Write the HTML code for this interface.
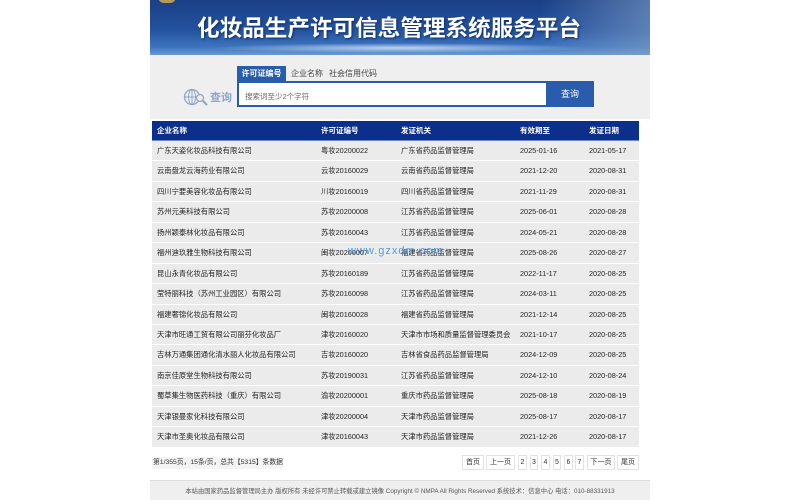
<!DOCTYPE html>
<html><head><meta charset="utf-8"><style>
*{margin:0;padding:0;box-sizing:border-box}
body{width:800px;height:500px;background:#fff;font-family:"Liberation Sans","Noto Sans CJK SC",sans-serif;position:relative;overflow:hidden}
.ban{position:absolute;left:150px;top:0;width:500px;height:55px;background:linear-gradient(180deg,#1a3f86 0%,#24539f 55%,#3d73bd 85%,#6a9ad3 100%);overflow:hidden}
.ban .glow{position:absolute;left:60px;right:60px;bottom:2px;height:10px;background:radial-gradient(ellipse at center,rgba(220,235,255,.8),rgba(120,170,230,0) 70%)}
.ban .city{position:absolute;right:0;top:0;width:110px;height:55px;background:linear-gradient(90deg,rgba(60,100,160,0),rgba(130,160,200,.6))}
.ban .t{position:absolute;left:47px;top:11px;color:#fff;font-size:22.6px;font-weight:bold;font-family:"Noto Sans CJK SC",sans-serif;line-height:32px;text-shadow:1px 1px 2px #0b2a60;white-space:nowrap}
.ban .em{position:absolute;left:8px;top:-3px;width:18px;height:6px;border-radius:0 0 9px 9px;background:#b69a5a}
.sb{position:absolute;left:150px;top:55px;width:500px;height:64px;background:#efefef}
.tab{position:absolute;top:66px;height:15px;font-size:8px;line-height:15px;color:#444}
.tab.a{left:237px;width:49px;background:#2a5cae;color:#fff;font-weight:bold;text-align:center}
.inp{position:absolute;left:237px;top:81px;width:357px;height:26px;border:2px solid #2a5cae;background:#fff;font-size:7.5px;color:#666;padding:8px 6px}
.btn{position:absolute;left:546px;top:81px;width:48px;height:26px;background:#2a5cae;color:#fff;font-size:9px;text-align:center;line-height:26px}
.qi{position:absolute;left:210px;top:89px;font-size:11px;color:#8ea6c8;font-weight:bold}
.tb{position:absolute;left:152px;top:121px;width:487px}
.h{height:20px;background:#0c2f8c;color:#fff;font-size:7.5px;font-weight:bold;position:relative;border-bottom:1px solid #6f89c5}
.r{height:20.45px;background:#ebebeb;border-bottom:1px solid #fff;font-size:7.3px;color:#222;position:relative}
.h span,.r span{position:absolute;top:0;line-height:20px;white-space:nowrap}
.c1{left:5px}.c2{left:169px}.c3{left:249px}.c4{left:368px}.c5{left:437px}
.pg{position:absolute;top:455px;height:15px;border:1px solid #e2e2e2;font-size:7px;line-height:13px;text-align:center;color:#333;background:#fff}
.foot{position:absolute;left:150px;top:480px;width:500px;height:20px;background:#efefef;border-top:1px solid #ddd;font-size:6.3px;color:#555;text-align:center;line-height:22px;white-space:nowrap}
.wm{position:absolute;left:348px;top:245px;color:#3a8ee0;font-size:11px;letter-spacing:1px;opacity:.85}
</style></head><body>
<div class="ban"><div class="city"></div><div class="glow"></div><div class="em"></div><div class="t">化妆品生产许可信息管理系统服务平台</div></div>
<div class="sb"></div>
<svg style="position:absolute;left:183px;top:88px" width="26" height="18" viewBox="0 0 26 18"><circle cx="9" cy="9" r="7.5" fill="none" stroke="#8ea6c8" stroke-width="1.3"/><ellipse cx="9" cy="9" rx="3.5" ry="7.5" fill="none" stroke="#8ea6c8" stroke-width="1"/><line x1="1.5" y1="9" x2="16.5" y2="9" stroke="#8ea6c8"/><line x1="9" y1="1.5" x2="9" y2="16.5" stroke="#8ea6c8"/><circle cx="17" cy="10" r="3.5" fill="#efefef" stroke="#8ea6c8" stroke-width="1.3"/><line x1="19.5" y1="12.5" x2="24" y2="17" stroke="#8ea6c8" stroke-width="2"/></svg>
<div class="qi">查询</div>
<div class="tab a">许可证编号</div><div class="tab" style="left:291px">企业名称</div><div class="tab" style="left:329px">社会信用代码</div>
<div class="inp">搜索词至少2个字符</div><div class="btn">查询</div>
<div class="tb">
<div class="h"><span class="c1">企业名称</span><span class="c2">许可证编号</span><span class="c3">发证机关</span><span class="c4">有效期至</span><span class="c5">发证日期</span></div>
<div class="r"><span class="c1">广东天姿化妆品科技有限公司</span><span class="c2">粤妆20200022</span><span class="c3">广东省药品监督管理局</span><span class="c4">2025-01-16</span><span class="c5">2021-05-17</span></div>
<div class="r"><span class="c1">云南盘龙云海药业有限公司</span><span class="c2">云妆20160029</span><span class="c3">云南省药品监督管理局</span><span class="c4">2021-12-20</span><span class="c5">2020-08-31</span></div>
<div class="r"><span class="c1">四川宁要美容化妆品有限公司</span><span class="c2">川妆20160019</span><span class="c3">四川省药品监督管理局</span><span class="c4">2021-11-29</span><span class="c5">2020-08-31</span></div>
<div class="r"><span class="c1">苏州元美科技有限公司</span><span class="c2">苏妆20200008</span><span class="c3">江苏省药品监督管理局</span><span class="c4">2025-06-01</span><span class="c5">2020-08-28</span></div>
<div class="r"><span class="c1">扬州颖泰林化妆品有限公司</span><span class="c2">苏妆20160043</span><span class="c3">江苏省药品监督管理局</span><span class="c4">2024-05-21</span><span class="c5">2020-08-28</span></div>
<div class="r"><span class="c1">福州迪玖雅生物科技有限公司</span><span class="c2">闽妆20200007</span><span class="c3">福建省药品监督管理局</span><span class="c4">2025-08-26</span><span class="c5">2020-08-27</span></div>
<div class="r"><span class="c1">昆山永青化妆品有限公司</span><span class="c2">苏妆20160189</span><span class="c3">江苏省药品监督管理局</span><span class="c4">2022-11-17</span><span class="c5">2020-08-25</span></div>
<div class="r"><span class="c1">莹特丽科技（苏州工业园区）有限公司</span><span class="c2">苏妆20160098</span><span class="c3">江苏省药品监督管理局</span><span class="c4">2024-03-11</span><span class="c5">2020-08-25</span></div>
<div class="r"><span class="c1">福建奢锦化妆品有限公司</span><span class="c2">闽妆20160028</span><span class="c3">福建省药品监督管理局</span><span class="c4">2021-12-14</span><span class="c5">2020-08-25</span></div>
<div class="r"><span class="c1">天津市旺通工贸有限公司丽芬化妆品厂</span><span class="c2">津妆20160020</span><span class="c3">天津市市场和质量监督管理委员会</span><span class="c4">2021-10-17</span><span class="c5">2020-08-25</span></div>
<div class="r"><span class="c1">吉林万通集团通化清水丽人化妆品有限公司</span><span class="c2">吉妆20160020</span><span class="c3">吉林省食品药品监督管理局</span><span class="c4">2024-12-09</span><span class="c5">2020-08-25</span></div>
<div class="r"><span class="c1">南京佳原堂生物科技有限公司</span><span class="c2">苏妆20190031</span><span class="c3">江苏省药品监督管理局</span><span class="c4">2024-12-10</span><span class="c5">2020-08-24</span></div>
<div class="r"><span class="c1">蜀草集生物医药科技（重庆）有限公司</span><span class="c2">渝妆20200001</span><span class="c3">重庆市药品监督管理局</span><span class="c4">2025-08-18</span><span class="c5">2020-08-19</span></div>
<div class="r"><span class="c1">天津银曼家化科技有限公司</span><span class="c2">津妆20200004</span><span class="c3">天津市药品监督管理局</span><span class="c4">2025-08-17</span><span class="c5">2020-08-17</span></div>
<div class="r"><span class="c1">天津市圣奥化妆品有限公司</span><span class="c2">津妆20160043</span><span class="c3">天津市药品监督管理局</span><span class="c4">2021-12-26</span><span class="c5">2020-08-17</span></div>
</div>
<div class="wm">www.gzxdm.com</div>
<div style="position:absolute;left:152px;top:457px;width:131px;height:12px;background:#f3f3f3;font-size:6.8px;line-height:12px;color:#333;padding-left:1px;white-space:nowrap;overflow:hidden">第1/355页，15条/页，总共【5315】条数据</div>
<div class="pg" style="left:462px;width:22px">首页</div>
<div class="pg" style="left:486px;width:29px">上一页</div>
<div class="pg" style="left:518px;width:9px">2</div>
<div class="pg" style="left:530px;width:8px">3</div>
<div class="pg" style="left:541px;width:9px">4</div>
<div class="pg" style="left:553px;width:8px">5</div>
<div class="pg" style="left:564px;width:9px">6</div>
<div class="pg" style="left:575px;width:9px">7</div>
<div class="pg" style="left:587px;width:28px">下一页</div>
<div class="pg" style="left:617px;width:22px">尾页</div>
<div class="foot">本站由国家药品监督管理局主办 版权所有 未经许可禁止转载或建立镜像 Copyright © NMPA All Rights Reserved 系统技术：信息中心 电话：010-88331913</div>
</body></html>
